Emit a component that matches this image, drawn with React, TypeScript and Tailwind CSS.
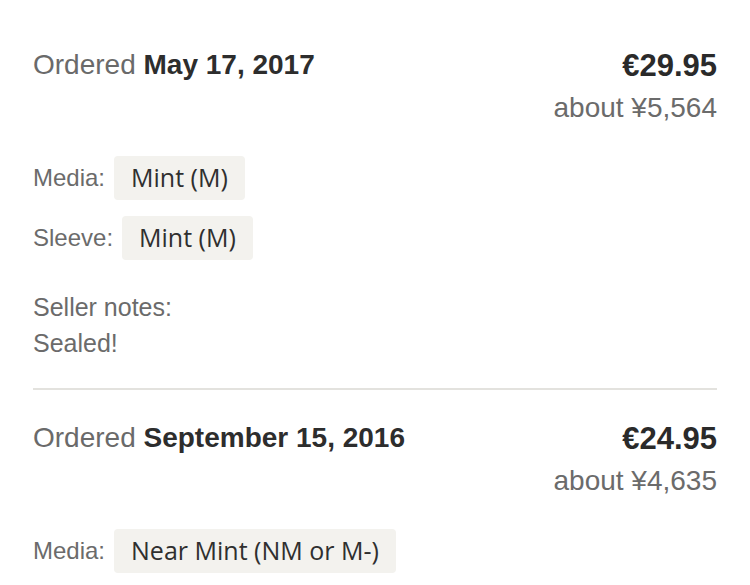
import { FC } from 'react';

interface Condition {
  label: string;
  grade: string;
}

interface Order {
  date: string;
  price: string;
  converted: string;
  conditions: Condition[];
  notes?: string;
}

const orders: Order[] = [
  {
    date: 'May 17, 2017',
    price: '€29.95',
    converted: 'about ¥5,564',
    conditions: [
      { label: 'Media:', grade: 'Mint (M)' },
      { label: 'Sleeve:', grade: 'Mint (M)' },
    ],
    notes: 'Sealed!',
  },
  {
    date: 'September 15, 2016',
    price: '€24.95',
    converted: 'about ¥4,635',
    conditions: [{ label: 'Media:', grade: 'Near Mint (NM or M-)' }],
  },
];

const OrderItem: FC<{ order: Order; last: boolean }> = ({ order, last }) => {
  return (
    <div className={last ? 'pt-[32px]' : 'pt-[32px] pb-[27px] border-b-2 border-[#e3e2de]'}>
      <div className="flex items-start justify-between">
        <p className="text-[28px] leading-[32px] text-[#6a6a6a]">
          Ordered <span className="font-bold text-[#2d2d2d]">{order.date}</span>
        </p>
        <div className="flex flex-col items-end">
          <p className="text-[31px] leading-[34px] font-bold text-[#2a2a2a]">{order.price}</p>
          <p className="mt-[7px] text-[28px] leading-[36px] text-[#6b6b6b]">{order.converted}</p>
        </div>
      </div>

      <div className="mt-[30px] flex flex-col gap-4">
        {order.conditions.map((c, i) => (
          <div className="flex items-center gap-[9px]" key={i}>
            <span className="text-[24px] leading-[28px] text-[#6b6b6b]">{c.label}</span>
            <span className="h-[44px] flex items-center px-[17px] rounded-[4px] bg-[#f3f2ee] font-['Open_Sans'] text-[25px] text-[#2f2f2f]">
              {c.grade}
            </span>
          </div>
        ))}
      </div>

      {order.notes && (
        <div className="mt-[29px] text-[25px] leading-[36px] text-[#6b6b6b]">
          <p>Seller notes:</p>
          <p>{order.notes}</p>
        </div>
      )}
    </div>
  );
};

export default function App() {
  return (
    <div className="w-[750px] h-[585px] overflow-hidden bg-white px-[33px] pt-[17px] font-['Liberation_Sans',Arial,sans-serif]">
      {orders.map((order, index) => (
        <OrderItem key={index} order={order} last={index === orders.length - 1} />
      ))}
    </div>
  );
}
